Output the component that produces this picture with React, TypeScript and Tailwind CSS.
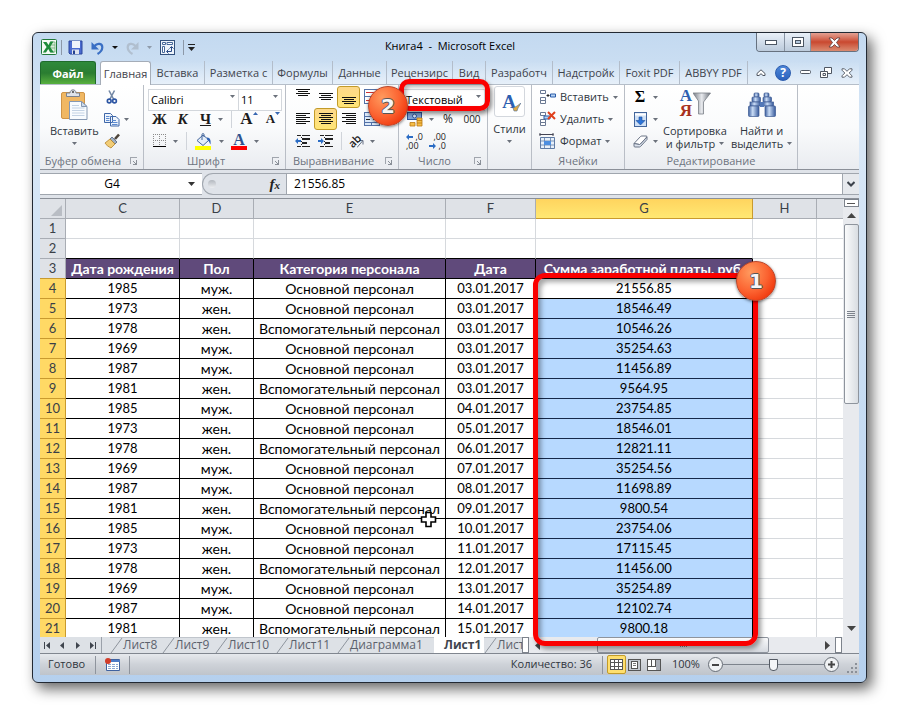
import React from "react";

const UI = "font-['Open_Sans','Noto_Sans',sans-serif]";

/* ---------- small shared pieces ---------- */

function Caret({ className = "" }: { className?: string }) {
  return (
    <svg width="5" height="3" viewBox="0 0 5 3" className={`shrink-0 ${className}`} aria-hidden="true">
      <path d="M0 0h5L2.500 3z" fill="#6b717b" />
    </svg>
  );
}

function Launcher() {
  return (
    <button aria-label="Параметры группы" className="mr-px flex h-[14px] w-4 items-center justify-center">
      <svg width="8" height="8" viewBox="0 0 8 8" shapeRendering="crispEdges">
        <path d="M0 7V0h7v1H1v6z" fill="#a0a5ad" />
        <path d="M7 3v5H3V7h2V6H4V5H3V4h1v1h1v1h1V3z" fill="#8a9098" />
      </svg>
    </button>
  );
}

function Group({
  label,
  width,
  launcher,
  children,
}: {
  label: string;
  width: string;
  launcher?: boolean;
  children: React.ReactNode;
}) {
  return (
    <section aria-label={label || "Стили"} className={`flex shrink-0 flex-col border-r border-[#b9bec6] pt-px ${width}`}>
      <div className="h-[67px]">{children}</div>
      <div className="flex h-4 items-center">
        <span className="flex-1 text-center text-[11px] leading-4 whitespace-nowrap text-[#6d7480]">{label}</span>
        {launcher && <Launcher />}
      </div>
    </section>
  );
}

function Tool({
  label,
  active,
  width = "w-[23px]",
  children,
}: {
  label: string;
  active?: boolean;
  width?: string;
  children: React.ReactNode;
}) {
  return (
    <button
      aria-label={label}
      className={`flex h-[22px] shrink-0 items-center justify-center ${width} ${
        active ? "rounded-[3px] border border-[#c29b29] bg-linear-to-b from-[#fdd88a] to-[#ffe575]" : ""
      }`}
    >
      {children}
    </button>
  );
}

function Divider() {
  return <div className="h-[18px] w-px shrink-0 bg-[#d0d4da]" />;
}

function Lines({ rows }: { rows: [number, number][] }) {
  return (
    <svg width="16" height="14" viewBox="0 0 16 14" shapeRendering="crispEdges">
      {rows.map(([x, w], i) => (
        <rect key={i} x={x} y={i * 2 + 1} width={w} height="1" fill="#111" />
      ))}
    </svg>
  );
}

function IndentIcon({ flip }: { flip?: boolean }) {
  return (
    <svg width="16" height="15" viewBox="0 0 16 15" shapeRendering="crispEdges">
      <path d="M2 1h4v1H2zM7 1h8v1H7zM7 4h8v2H7zM7 8h5v2H7zM2 12h4v1H2zM7 12h8v1H7zM6 3h1v1H6zM6 7h1v1H6zM6 10h1v1H6z" fill="#222" />
      <path d={flip ? "M6 7 3 4v2H0v2h3v2z" : "M0 7 3 4v2h3v2H3v2z"} fill="#2b6cc4" shapeRendering="auto" />
    </svg>
  );
}

/* ---------- icons ---------- */

const ExcelLogo = () => (
  <svg width="17" height="17" viewBox="0 0 17 17">
    <rect x=".5" y=".5" width="15" height="15" rx="1" fill="#f5faf5" stroke="#237a3b" />
    <path d="M9 3h5v10H9z" fill="#d9ecd9" stroke="#62a86e" strokeWidth=".7" />
    <path d="M9 6h5M9 9h5" stroke="#62a86e" strokeWidth=".7" />
    <path d="M2 3h3.500l2 3 2-3.500h3L9 8l4 5.500H9.500L7.200 10 5 13.500H1.800L5.600 8z" fill="#1f8c3b" />
  </svg>
);
const SaveIcon = () => (
  <svg width="15" height="15" viewBox="0 0 15 15">
    <path d="M1 1h13v13H2l-1-1z" fill="#4a6bd0" stroke="#2b479c" />
    <path d="M4 1h8v7H4z" fill="#eef3fb" />
    <path d="M4 9.500h7V14H4z" fill="#dfe4ee" />
    <path d="M5 10.500h2V14H5z" fill="#25418f" />
  </svg>
);
const UndoIcon = ({ color = "#3a6fc4", flip = false }) => (
  <svg width="13" height="14" viewBox="0 0 13 14" className={flip ? "-scale-x-100" : ""}>
    <path d="M3.500 5C6.500 1.500 11.500 2.500 11.300 6.500c-.1 2.500-1.800 4.800-4.800 6.500" fill="none" stroke={color} strokeWidth="2.200" />
    <path d="M.5 1v7.500H8z" fill={color} />
  </svg>
);
const PivotIcon = () => (
  <svg width="15" height="15" viewBox="0 0 15 15">
    <rect x=".5" y=".5" width="14" height="14" fill="#eef4fb" stroke="#33517d" />
    <path d="M2.500 2.500h3v2h-3zM7 2.500h5.500v2H7zM2.500 6.500h2v6h-2z" fill="#fff" stroke="#47689a" />
    <path d="M7 11.500h4.500V7M9.500 8.500l2-2 2 2M8.500 9.500l-2 2 2 2" fill="none" stroke="#2a4b86" />
  </svg>
);
const PasteIcon = () => (
  <svg width="28" height="32" viewBox="0 0 28 32">
    <rect x="1.500" y="3.500" width="23" height="26" rx="1.500" fill="#f0b762" stroke="#cf9446" />
    <path d="M6.500 7.500V4h3.500C10-.2 16-.2 16 4h3.500v3.500z" fill="#dfe3e8" stroke="#7b838e" />
    <circle cx="13" cy="3" r="1" fill="#444" />
    <path d="M9.500 12.500h12l5.500 5v13H9.500z" fill="#f8fbfe" stroke="#8598b3" />
    <path d="M21.500 12.500v5H27z" fill="#cfdcec" stroke="#8598b3" />
    <path d="M12 16.500h7M12 19h12.500M12 21.500h12.500M12 24h12.500M12 26.500h12.500" stroke="#c3d2e4" />
  </svg>
);
const CutIcon = () => (
  <svg width="12" height="16" viewBox="0 0 12 16">
    <path d="M3 1.500 7.500 10M8.500 1.500 4 10" stroke="#7488a5" strokeWidth="1.600" />
    <circle cx="3.200" cy="12" r="1.900" fill="none" stroke="#2c55a3" strokeWidth="1.600" />
    <circle cx="8.500" cy="12" r="1.900" fill="none" stroke="#2c55a3" strokeWidth="1.600" />
  </svg>
);
const CopyIcon = () => (
  <svg width="16" height="15" viewBox="0 0 16 15">
    <path d="M.5 1.500h6l2 2v7h-8zM6.500 4.500h5.500l3 3v6.500H6.500z" fill="#eef4fc" stroke="#3f67a8" />
    <path d="M2 4.500h3.500M2 6.500h3.500M2 8.500h3.500M8 8.500h4M8 10.500h5.500M8 12.500h5.500" stroke="#5d8bd0" />
  </svg>
);
const BrushIcon = () => (
  <svg width="16" height="16" viewBox="0 0 16 16">
    <path d="M15 1.500 11 6" stroke="#4d443a" strokeWidth="2.600" />
    <path d="m8 4 5 5-2 2-5-5z" fill="#9fb0c4" stroke="#50617a" strokeWidth=".8" />
    <path d="m6 6 5 5-4 4c-2-1-5-3-6-5z" fill="#f2cd76" stroke="#b2822b" strokeWidth=".8" />
  </svg>
);
const BorderIcon = () => (
  <svg width="14" height="14" viewBox="0 0 14 14" shapeRendering="crispEdges">
    <path d="M0 .5h13M0 6.500h13M.5 0v12M6.500 0v12M12.500 0v12" stroke="#8b8b8b" strokeDasharray="1 1" fill="none" />
    <path d="M0 12.500h13" stroke="#000" />
  </svg>
);
const FillIcon = () => (
  <svg width="17" height="17" viewBox="0 0 17 17">
    <path d="m2 7.500 6-5.500 6 5-6 5.500z" fill="#e4edf8" stroke="#42659b" />
    <path d="M7 7V1.500c0-1.300 2-1.300 2 0V4" fill="none" stroke="#42659b" />
    <path d="M12 4.500c3.500 0 4 3.500 3.500 7-1-1-1-3.500-3.500-5z" fill="#2f62b5" />
    <rect y="13" width="16" height="4" fill="#ff0" />
  </svg>
);
const MoneyIcon = () => (
  <svg width="17" height="16" viewBox="0 0 17 16">
    <rect x=".5" y="1.500" width="14" height="7" fill="#7ea2d6" stroke="#2d559c" />
    <circle cx="7.500" cy="5" r="2" fill="#dbe7f7" stroke="#2d559c" />
    <path d="M10 7h5v8h-5zM3 11.500h5V15H3z" fill="#f5bd47" stroke="#bb7a12" strokeWidth=".8" />
    <path d="M10 9.500h5M10 12h5" stroke="#bb7a12" strokeWidth=".8" />
  </svg>
);
const DecimalIcon = ({ more = false }) => (
  <span className="relative flex w-[17px] flex-col items-end text-[9px] leading-[9px] text-[#222]">
    <span>{more ? ",0" : ",00"}</span>
    <span className={more ? "self-start" : ""}>{more ? ",00" : ",0"}</span>
    <svg width="7" height="6" viewBox="0 0 7 6" className={`absolute left-0 ${more ? "top-[2px]" : "bottom-px"}`}>
      <path d={more ? "M0 3 3 0v2h4v2H3v2z" : "M7 3 4 0v2H0v2h4v2z"} fill="#2b6cc4" />
    </svg>
  </span>
);
const CellsIcon = ({ kind }: { kind: "insert" | "delete" | "format" }) => (
  <svg width="17" height="16" viewBox="0 0 17 16">
    {kind === "format" ? (
      <>
        <path d="M.5 1.500h14M1 0v3M14 0v3" stroke="#445" />
        <path d="M1.500 4.500h14v11h-14z" fill="#e7f0fb" stroke="#5f7ba5" />
        <path d="M1.500 8h14M1.500 12h14M5.500 4.500v11M11.500 4.500v11" stroke="#5f7ba5" strokeWidth=".8" />
        <rect x="5" y="8" width="7" height="4" fill="#4d8ee0" />
      </>
    ) : (
      <>
        <path d="M1.500 1.500h5v3h-5zM1.500 8.500h5v3h-5zM1.500 11.500h5v3h-5z" fill="#fff" stroke="#6a7892" />
        {kind === "insert" ? (
          <>
            <path d="M7.500 6.500h3M9 5v3" stroke="#222" />
            <path d="M11.500 5h5v3h-5z" fill="#b8d4f5" stroke="#2b5ca8" />
          </>
        ) : (
          <>
            <path d="M5 5h6v3H5z" fill="#b8d4f5" stroke="#2b5ca8" />
            <path d="m9 1 7 7M16 1 9 8" stroke="#e0401c" strokeWidth="2" />
          </>
        )}
      </>
    )}
  </svg>
);
const FillDownIcon = () => (
  <svg width="13" height="15" viewBox="0 0 13 15">
    <rect x=".5" y=".5" width="12" height="14" fill="#cfe0f5" stroke="#42659b" />
    <path d="M1 2.500h11" stroke="#fff" strokeWidth="2" />
    <path d="M5 5h3v3.500h3L6.500 13 2 8.500h3z" fill="#2c74d8" stroke="#1d4f9c" strokeWidth=".6" />
  </svg>
);
const EraserIcon = () => (
  <svg width="15" height="13" viewBox="0 0 15 13">
    <path d="M1 8.500 7.500 1.500q.5-.5 1.500-.5h4q1.500 0 .7 1L7.500 9q-.4.500-1 .5z" fill="#fff" stroke="#6a7486" />
    <path d="M1 8.500V11q0 1 1 1h4.500q.6 0 1-.5L14 4.500V2L7.500 9q-.4.500-1 .5z" fill="#dde4ee" stroke="#6a7486" />
  </svg>
);
const SortIcon = () => (
  <div className="flex h-[34px] w-[32px]">
    <div className="flex w-[14px] flex-col font-['Liberation_Serif',serif] text-[17px] leading-[15px] font-bold">
      <span className="text-[#2d5fb0]">А</span>
      <span className="text-[#a8321e]">Я</span>
    </div>
    <svg width="18" height="26" viewBox="0 0 18 26" className="mt-1">
      <defs>
        <linearGradient id="funnel">
          <stop offset="0" stopColor="#777c84" />
          <stop offset=".5" stopColor="#e8eaee" />
          <stop offset="1" stopColor="#6d727a" />
        </linearGradient>
      </defs>
      <path d="M0 1h17.500L10.500 10v12h-5V9z" fill="url(#funnel)" stroke="#7b8088" strokeWidth=".8" />
    </svg>
  </div>
);
const FindIcon = () => (
  <svg width="28" height="26" viewBox="0 0 28 26">
    <defs>
      <linearGradient id="tube">
        <stop offset="0" stopColor="#3d5f9e" />
        <stop offset=".4" stopColor="#c9dcf6" />
        <stop offset="1" stopColor="#35589a" />
      </linearGradient>
    </defs>
    {[0, 15].map((x) => (
      <g key={x} transform={`translate(${x} 0)`} stroke="#3c5a92" strokeWidth=".7">
        <rect x={x ? 1 : 6} y="1" width="5" height="4" rx="1" fill="url(#tube)" />
        <rect x={x ? 0 : 4} y="5" width="8.500" height="5" rx="1" fill="url(#tube)" />
        <rect x={x ? 0 : 2} y="10" width="10.500" height="4" fill="url(#tube)" />
        <rect x={x ? 2 : 0.5} y="14" width="10.500" height="10.500" rx="1" fill="url(#tube)" />
      </g>
    ))}
    <rect x="12" y="10" width="4" height="5" fill="#5278b8" />
  </svg>
);

/* ---------- title bar ---------- */

function TitleBar() {
  return (
    <header className="flex h-7 items-start">
      <div className="flex flex-1 items-center pt-[6px] pl-px">
        <ExcelLogo />
        <div className="ml-[3px] h-[15px] w-px bg-[#8c98a8]" />
        <button aria-label="Сохранить" className="ml-[6px]"><SaveIcon /></button>
        <button aria-label="Отменить" className="ml-2"><UndoIcon /></button>
        <svg width="6" height="3" className="ml-2"><path d="M0 0h6L3 3z" fill="#111" /></svg>
        <button aria-label="Вернуть" className="ml-2 opacity-60"><UndoIcon color="#a3adb9" flip /></button>
        <Caret className="ml-2 opacity-60" />
        <button aria-label="Сводная таблица" className="ml-2"><PivotIcon /></button>
        <div className="ml-2 h-[15px] w-px bg-[#8c98a8]" />
        <button aria-label="Настройка панели" className="ml-1">
          <svg width="8" height="8" viewBox="0 0 8 8"><path d="M0 0h7v1H0zM0 3h7L3.500 7z" fill="#222" /></svg>
        </button>
      </div>
      <h1 className="pt-[5px] text-[11px] leading-4 whitespace-nowrap text-black">Книга4&nbsp; -&nbsp; Microsoft Excel</h1>
      <div className="flex flex-1 justify-end">
        <div className="flex h-[19px] overflow-hidden rounded-b-[4px] border border-t-0 border-[#66717f]">
          <button aria-label="Свернуть" className="flex w-7 items-center justify-center border-r border-[#8793a2] bg-linear-to-b from-[#e9f0f8] to-[#bccbdc]">
            <svg width="12" height="5"><rect x=".5" y=".5" width="11" height="4" fill="#fff" stroke="#4c5663" /></svg>
          </button>
          <button aria-label="Развернуть" className="flex w-[26px] items-center justify-center border-r border-[#8793a2] bg-linear-to-b from-[#e9f0f8] to-[#bccbdc]">
            <svg width="12" height="10"><rect x=".5" y=".5" width="11" height="9" fill="#fff" stroke="#4c5663" /><rect x="3.500" y="3.500" width="5" height="3" fill="#b4c8dd" stroke="#4c5663" /></svg>
          </button>
          <button aria-label="Закрыть" className="flex w-[47px] items-center justify-center bg-linear-to-b from-[#e3a193] via-[#c9482f] to-[#d98a70]">
            <svg width="13" height="11" viewBox="0 0 13 11"><path d="M1 1h3l2.500 2.500L9 1h3L8.500 5.500 12 10H9L6.500 7.500 4 10H1l3.500-4.500z" fill="#fff" stroke="#5b3a3a" strokeWidth=".8" /></svg>
          </button>
        </div>
      </div>
    </header>
  );
}

/* ---------- ribbon tabs ---------- */

const TABS: [string, string][] = [
  ["Вставка", "w-[54px]"],
  ["Разметка с", "w-[68px]"],
  ["Формулы", "w-[60px]"],
  ["Данные", "w-[54px]"],
  ["Рецензирс", "w-[66px]"],
  ["Вид", "w-[33px]"],
  ["Разработч", "w-[67px]"],
  ["Надстройк", "w-[67px]"],
  ["Foxit PDF", "w-[60px]"],
  ["ABBYY PDF", "w-[68px]"],
];

function Tabs() {
  return (
    <nav className="flex h-[23px] text-[11px] leading-[21px] whitespace-nowrap text-[#3f444c]">
      <button className="w-14 rounded-t-[3px] border border-b-0 border-[#1f6b2c] bg-linear-to-b from-[#2f8a3b] via-[#2a7d31] to-[#58b03e] font-bold text-white">
        Файл
      </button>
      <button className="relative z-10 -mb-px ml-1 w-[51px] rounded-t-[3px] border border-b-0 border-[#a5adb8] bg-white">
        Главная
      </button>
      {TABS.map(([t, w]) => (
        <button key={t} className={`border-r border-[#b3bdca] bg-linear-to-b from-white/0 to-white/50 ${w}`}>
          {t}
        </button>
      ))}
      <div className="flex flex-1 items-center justify-between bg-linear-to-b from-white/0 to-white/50 pr-[6px] pl-2">
        <button aria-label="Свернуть ленту">
          <svg width="10" height="8" viewBox="0 0 10 8"><path d="M5 .8 9 4.500v2H7L5 4.700 3 6.500H1v-2z" fill="#fff" stroke="#4f5662" /></svg>
        </button>
        <button aria-label="Справка" className="flex size-4 items-center justify-center rounded-full border border-[#2b5cae] bg-linear-to-b from-[#4d86d8] to-[#2c62bd] text-[12px] leading-[14px] font-bold text-white">
          ?
        </button>
        <button aria-label="Свернуть окно"><svg width="11" height="5"><rect x=".5" y=".5" width="10" height="3" rx="1" fill="#fff" stroke="#4f5662" /></svg></button>
        <button aria-label="Восстановить окно">
          <svg width="12" height="11"><path d="M4.500.5h7v6h-7z" fill="#fff" stroke="#4f5662" /><path d="M.5 4.500h7v6h-7z" fill="#fff" stroke="#4f5662" /><path d="M3 6.500h2.500v2H3z" fill="none" stroke="#4f5662" /></svg>
        </button>
        <button aria-label="Закрыть книгу">
          <svg width="12" height="10" viewBox="0 0 12 10"><path d="M1 .8h2.500L6 3.300 8.500.8H11v1.400L8.200 5 11 7.800v1.400H8.500L6 6.700 3.500 9.200H1V7.800L3.800 5 1 2.200z" fill="#fff" stroke="#4f5662" strokeWidth=".9" /></svg>
        </button>
      </div>
    </nav>
  );
}

/* ---------- ribbon ---------- */

function Combo({ label, value, className }: { label: string; value: string; className: string }) {
  return (
    <div className={`relative h-[22px] ${className}`}>
      <select
        aria-label={label}
        defaultValue={value}
        className="size-full appearance-none border border-[#d3d7dc] bg-white pl-[2px] text-[11px] leading-4 text-black"
      >
        <option>{value}</option>
      </select>
      <Caret className="pointer-events-none absolute top-[9px] right-1" />
    </div>
  );
}

function Badge({ n, className }: { n: number; className: string }) {
  return (
    <div
      className={`absolute z-30 flex size-10 items-center justify-center rounded-full border border-[#b8452a] bg-radial-[at_35%_28%] from-[#ff9a5e] via-[#fb6230] to-[#ee3208] to-85% font-['DejaVu_Sans',sans-serif] text-[20px] leading-none font-bold text-[#f6f6f6] shadow-[0_1px_3px_rgba(0,0,0,.5)] [text-shadow:1px_0_#555,-1px_0_#555,0_1px_#555,0_-1px_#555] ${className}`}
    >
      {n}
    </div>
  );
}

function BigButton({ icon, lines }: { icon: React.ReactNode; lines: string[] }) {
  return (
    <button className="flex flex-col items-center text-[11px] leading-[13px] whitespace-nowrap text-[#2f3640]">
      <span className="flex h-[38px] items-center">{icon}</span>
      <span>{lines[0]}</span>
      <span className="flex h-[13px] items-center gap-1">
        {lines[1]}
        <Caret />
      </span>
    </button>
  );
}

const FULL: [number, number] = [1, 14];
const MID: [number, number] = [3, 10];

function Ribbon() {
  return (
    <div className="flex h-[86px] border-y border-t-[#b5bec9] border-b-[#8b9098] bg-linear-to-b from-white via-[#fafbfc] to-[#e9ecf0]">
      <Group label="Буфер обмена" width="w-[104px]" launcher>
        <div className="flex">
          <div className="w-[64px] pl-[10px]">
            <BigButton icon={<PasteIcon />} lines={["Вставить", ""]} />
          </div>
          <div className="flex flex-col">
            <Tool label="Вырезать" width="w-4"><CutIcon /></Tool>
            <div className="flex items-center gap-1"><Tool label="Копировать" width="w-4"><CopyIcon /></Tool><Caret /></div>
            <Tool label="Формат по образцу" width="w-4"><BrushIcon /></Tool>
          </div>
        </div>
      </Group>

      <Group label="Шрифт" width="w-[142px]" launcher>
        <div className="pl-1">
          <div className="flex h-[22px]">
            <Combo label="Шрифт" value="Calibri" className="w-[91px]" />
            <Combo label="Размер шрифта" value="11" className="-ml-px w-11" />
          </div>
          <div className="flex h-[22px] items-center font-['Liberation_Serif',serif] text-[15px] font-bold text-[#1c1c1c]">
            <Tool label="Полужирный">Ж</Tool>
            <Tool label="Курсив"><i>К</i></Tool>
            <Tool label="Подчеркнутый"><u>Ч</u></Tool>
            <Caret className="ml-px" />
            <div className="ml-2"><Divider /></div>
            <Tool label="Увеличить размер" width="w-8 ml-px">
              <span className="text-[17px]">А</span>
              <svg width="5" height="3" className="mb-3"><path d="M0 3h5L2.500 0z" fill="#3666b0" /></svg>
            </Tool>
            <Tool label="Уменьшить размер" width="w-4">
              <span className="text-[13px]">А</span>
              <svg width="5" height="3" className="mb-3"><path d="M0 0h5L2.500 3z" fill="#3666b0" /></svg>
            </Tool>
          </div>
          <div className="flex h-[22px] items-center">
            <Tool label="Границы"><BorderIcon /></Tool>
            <Caret className="ml-[2px]" />
            <div className="ml-2"><Divider /></div>
            <Tool label="Цвет заливки" width="w-8"><FillIcon /></Tool>
            <Caret />
            <Tool label="Цвет текста" width="w-[30px]">
              <span className="w-4 border-b-4 border-[#f00] text-center font-['Liberation_Serif',serif] text-[16px] leading-[13px] font-bold text-[#2f528f]">А</span>
            </Tool>
            <Caret />
          </div>
        </div>
      </Group>

      <Group label="Выравнивание" width="w-[113px]" launcher>
        <div className="pl-[5px]">
          <div className="flex h-[22px]">
            <Tool label="По верхнему краю"><span className="mb-1"><Lines rows={[FULL, MID, FULL, MID]} /></span></Tool>
            <Tool label="По середине"><Lines rows={[[1, 0], FULL, MID, FULL, MID]} /></Tool>
            <Tool label="По нижнему краю" active><span className="mt-1"><Lines rows={[[1, 0], [1, 0], FULL, MID, FULL, MID]} /></span></Tool>
            <Tool label="Перенос текста">
              <svg width="16" height="16" shapeRendering="crispEdges"><path d="M.5.500h15v14H.5zM0 7.500h15" fill="#fff" stroke="#5472a8" /><path d="M2 3.500h12M2 11.500h12" stroke="#c33" /></svg>
            </Tool>
          </div>
          <div className="flex h-[22px]">
            <Tool label="По левому краю"><Lines rows={[[1, 14], [1, 10], [1, 14], [1, 10], [1, 14], [1, 10]]} /></Tool>
            <Tool label="По центру" active><Lines rows={[FULL, MID, FULL, MID, FULL, MID]} /></Tool>
            <Tool label="По правому краю"><Lines rows={[[1, 14], [5, 10], [1, 14], [5, 10], [1, 14], [5, 10]]} /></Tool>
            <Tool label="Объединить">
              <svg width="16" height="15" shapeRendering="crispEdges"><path d="M.5.500h15v13H.5zM0 4.500h15M0 10.500h15M7.500 0v4M7.500 10v4" fill="#dce9f8" stroke="#5472a8" /><path d="M2 7.500h12" stroke="#222" strokeDasharray="4 3" /></svg>
            </Tool>
          </div>
          <div className="flex h-[22px] items-center">
            <Tool label="Уменьшить отступ"><IndentIcon /></Tool>
            <Tool label="Увеличить отступ"><IndentIcon flip /></Tool>
            <div className="ml-1"><Divider /></div>
            <Tool label="Ориентация" width="w-7">
              <span className="-rotate-45 text-[11px] leading-3 font-semibold text-[#222]">ab</span>
              <svg width="7" height="9" className="mt-1 -ml-1"><path d="M0 8.500 5.500 2M2 1.500h4v4" fill="none" stroke="#667085" /></svg>
            </Tool>
            <Caret />
          </div>
        </div>
      </Group>

      <Group label="Число" width="w-[89px]" launcher>
        <div className="relative pl-1">
          <div className="flex h-[22px]"><Combo label="Числовой формат" value="Текстовый" className="w-[82px]" /></div>
          <div className="flex h-[22px] items-center text-[11px] text-[#222]">
            <Tool label="Финансовый формат" width="w-6"><MoneyIcon /></Tool>
            <Caret className="ml-[2px]" />
            <Tool label="Процентный формат" width="w-7"><span className="text-[12px]">%</span></Tool>
            <Tool label="Формат с разделителями" width="w-5"><span className="text-[10px]">000</span></Tool>
          </div>
          <div className="flex h-[22px] items-center">
            <Tool label="Увеличить разрядность"><DecimalIcon more /></Tool>
            <Tool label="Уменьшить разрядность"><DecimalIcon /></Tool>
          </div>
          <div className="pointer-events-none absolute -top-[7px] left-0 z-20 h-8 w-[91px] rounded-[10px] border-5 border-[#fa0000] shadow-[2px_3px_4px_rgba(0,0,0,.45),inset_2px_3px_4px_rgba(0,0,0,.3)]" />
          <Badge n={2} className="top-0 left-[-31px]" />
        </div>
      </Group>

      <Group label="" width="w-11">
        <button className="flex w-full flex-col items-center text-[11px] leading-[13px] text-[#2f3640]">
          <span className="flex h-[31px] w-[31px] items-center justify-center rounded-[3px] border border-[#d3d7dd] bg-white font-['Liberation_Serif',serif] text-[19px] font-bold text-[#2d5fb0]">
            <span className="ml-1">А</span>
            <svg width="9" height="9" className="mt-3 -ml-1"><path d="M9 0 5 3 1 5l1 3h3l1-3z" fill="#e0ab45" stroke="#4f6f9c" strokeWidth=".6" /></svg>
          </span>
          <span className="mt-[5px]">Стили</span>
          <Caret className="mt-[5px]" />
        </button>
      </Group>

      <Group label="Ячейки" width="w-[93px]">
        <div className="pl-[7px] text-[11px] text-[#2f3640]">
          {(
            [
              ["insert", "Вставить"],
              ["delete", "Удалить"],
              ["format", "Формат"],
            ] as const
          ).map(([k, t]) => (
            <button key={k} className="flex h-[22px] items-center gap-1">
              <CellsIcon kind={k} />
              {t}
              <Caret />
            </button>
          ))}
        </div>
      </Group>

      <Group label="Редактирование" width="w-[173px]">
        <div className="flex pl-[6px]">
          <div className="w-8">
            <div className="flex items-center"><Tool label="Сумма" width="w-[18px]"><span className="font-['Liberation_Serif',serif] text-[16px] font-bold text-black">Σ</span></Tool><Caret className="ml-1" /></div>
            <div className="flex items-center"><Tool label="Заполнить" width="w-[18px]"><FillDownIcon /></Tool><Caret className="ml-1" /></div>
            <div className="flex items-center"><Tool label="Очистить" width="w-[18px]"><EraserIcon /></Tool><Caret className="ml-1" /></div>
          </div>
          <BigButton icon={<SortIcon />} lines={["Сортировка", "и фильтр"]} />
          <div className="w-1" />
          <BigButton icon={<FindIcon />} lines={["Найти и", "выделить"]} />
        </div>
      </Group>
    </div>
  );
}

/* ---------- formula bar ---------- */

function FormulaBar() {
  return (
    <div className="flex h-[29px] border-b border-[#8b9098] bg-[#dfe3e9] pt-[3px] pb-[3px] text-[12px] text-black">
      <div className="flex w-[162px] items-center border-y border-[#a0a6ae] bg-white pr-[7px] pl-0">
        <input aria-label="Имя ячейки" defaultValue="G4" className="min-w-0 flex-1 bg-transparent pr-1 text-center outline-none" />
        <svg width="7" height="4"><path d="M0 0h7L3.500 4z" fill="#333" /></svg>
      </div>
      <div className="flex w-[84px] items-center justify-between rounded-l-full border border-r-0 border-[#a0a6ae] pr-[6px] pl-[5px]">
        <span className="size-2 rounded-full bg-linear-to-b from-[#b3b8bf] to-[#eceef1]" />
        <button aria-label="Вставить функцию" className="font-['Liberation_Serif',serif] text-[15px] leading-4 font-bold text-[#222] italic">
          f<span className="text-[11px]">x</span>
        </button>
      </div>
      <input aria-label="Строка формул" defaultValue="21556.85" className="min-w-0 flex-1 border border-[#a0a6ae] bg-white pl-[7px] outline-none" />
      <button aria-label="Развернуть строку формул" className="flex w-4 items-center justify-center border-y border-[#a0a6ae] bg-[#e6e9ed]">
        <svg width="8" height="6"><path d="M.5 1 4 4.500 7.500 1" fill="none" stroke="#3c424b" strokeWidth="2" /></svg>
      </button>
    </div>
  );
}

/* ---------- worksheet ---------- */

const YEARS = ["1985", "1973", "1978", "1969", "1987", "1981"];
const SEX = ["муж.", "жен.", "жен.", "муж.", "муж.", "жен."];
const ROWS: [string, string][] = [
  ["03.01.2017", "21556.85"],
  ["03.01.2017", "18546.49"],
  ["03.01.2017", "10546.26"],
  ["03.01.2017", "35254.63"],
  ["03.01.2017", "11456.89"],
  ["03.01.2017", "9564.95"],
  ["04.01.2017", "23754.85"],
  ["05.01.2017", "18546.01"],
  ["06.01.2017", "12821.11"],
  ["07.01.2017", "35254.56"],
  ["08.01.2017", "11698.89"],
  ["09.01.2017", "9800.54"],
  ["10.01.2017", "23754.06"],
  ["11.01.2017", "17115.45"],
  ["12.01.2017", "11456.00"],
  ["13.01.2017", "35254.89"],
  ["14.01.2017", "12102.74"],
  ["15.01.2017", "9800.18"],
];

const HEAD = "border-r border-b border-[#a9adb4] bg-[#dfe2e7] text-[13px] font-normal text-[#3a3f47]";
const ROWHEAD = "border-r border-b font-normal text-[#3a3f47] text-[13px] h-5 p-0";
const EMPTY = "border-r border-b border-[#d6d9dd]";
const DATA = "border-r border-b border-black p-0";

function Sheet() {
  return (
    <div className="flex">
      <div className="relative h-[438px] min-w-0 flex-1">
        <div className="h-full overflow-hidden">
          <table className="w-full table-fixed border-separate border-spacing-0 bg-white text-center font-['Lato','Open_Sans',sans-serif] text-[14px] leading-[19px] whitespace-nowrap text-black">
            <colgroup>
              <col className="w-[26px]" />
              <col className="w-[114px]" />
              <col className="w-[74px]" />
              <col className="w-[192px]" />
              <col className="w-[90px]" />
              <col className="w-[217px]" />
              <col className="w-[64px]" />
              <col />
            </colgroup>
            <thead>
              <tr className="h-5">
                <th className={`${HEAD} p-0`}>
                  <svg width="11" height="11" className="mt-[3px] ml-[11px]"><path d="M11 0v11H0z" fill="#b9bdc4" /></svg>
                </th>
                {["C", "D", "E", "F"].map((c) => (
                  <th key={c} scope="col" className={`${HEAD} p-0`}>{c}</th>
                ))}
                <th scope="col" className="border-r border-b border-[#c99a2e] bg-linear-to-b from-[#ffd45e] to-[#ffe873] p-0 text-[13px] font-normal text-[#3a3f47]">G</th>
                <th scope="col" className={`${HEAD} p-0`}>H</th>
                <th className={`${HEAD} border-r-0 p-0`} />
              </tr>
            </thead>
            <tbody>
              {[1, 2].map((n) => (
                <tr key={n} className="h-5">
                  <th scope="row" className={`${ROWHEAD} border-[#a9adb4] bg-[#dfe2e7]`}>{n}</th>
                  {[0, 1, 2, 3, 4].map((i) => (
                    <td key={i} className={n === 2 ? "border-r border-b border-r-[#d6d9dd] border-b-black" : EMPTY} />
                  ))}
                  <td className={EMPTY} />
                  <td className="border-b border-[#d6d9dd]" />
                </tr>
              ))}
              <tr className="h-5 bg-[#604a7b] font-bold text-white">
                <th scope="row" className={`${ROWHEAD} border-r-[#a9adb4] border-b-[#c99a2e] bg-[#dfe2e7]`}>3</th>
                {["Дата рождения", "Пол", "Категория персонала", "Дата", "Сумма заработной платы, руб."].map((h) => (
                  <td key={h} className={DATA}>{h}</td>
                ))}
                <td className={`${EMPTY} bg-white`} />
                <td className="border-b border-[#d6d9dd] bg-white" />
              </tr>
              {ROWS.map(([date, sum], i) => (
                <tr key={i} className="h-5">
                  <th scope="row" className={`${ROWHEAD} border-[#c99a2e] bg-[#ffd965]`}>{i + 4}</th>
                  <td className={`${DATA} text-[13px]`}>{YEARS[i % 6]}</td>
                  <td className={DATA}>{SEX[i % 6]}</td>
                  <td className={DATA}>{i % 3 === 2 ? "Вспомогательный персонал" : "Основной персонал"}</td>
                  <td className={`${DATA} text-[13px]`}>{date}</td>
                  <td className={`${DATA} text-[13px] ${i ? "border-b-[#16294a] bg-[#b7d9ff]" : ""}`}>{sum}</td>
                  <td className={EMPTY} />
                  <td className="border-b border-[#d6d9dd]" />
                </tr>
              ))}
            </tbody>
          </table>
        </div>
        <div className="pointer-events-none absolute top-[74px] left-[493px] z-20 h-[373px] w-[225px] rounded-[12px] border-5 border-[#fa0000] shadow-[3px_3px_5px_rgba(0,0,0,.4),inset_3px_4px_5px_rgba(0,0,0,.35)]" />
        <Badge n={1} className="top-[62px] left-[696px]" />
        <svg width="17" height="17" viewBox="0 0 17 17" className="absolute top-[312px] left-[380px] z-10">
          <path d="M6 1.500h5V6h4.500v5H11v4.500H6V11H1.500V6H6z" fill="#fff" stroke="#000" strokeWidth="1.600" />
        </svg>
      </div>
      <div className="flex w-4 flex-col items-center bg-[#e8eaee]">
        <div className="flex h-[8px] w-[15px] items-center justify-center border border-[#7d838c] bg-white"><span className="h-px w-2 bg-[#555]" /></div>
        <button aria-label="Вверх" className="flex h-[17px] w-full items-center justify-center"><svg width="9" height="5"><path d="M0 5h9L4.500 0z" fill="#444" /></svg></button>
        <div className="flex h-[180px] w-[15px] flex-col items-center justify-center gap-px rounded-[2px] border border-[#8e949d] bg-linear-to-r from-[#fafbfc] to-[#d9dde2]">
          {[0, 1, 2, 3].map((i) => <span key={i} className="h-px w-2 bg-[#7d838c]" />)}
        </div>
        <div className="flex-1" />
        <button aria-label="Вниз" className="flex h-[17px] w-full items-center justify-center"><svg width="9" height="5"><path d="M0 0h9L4.500 5z" fill="#444" /></svg></button>
      </div>
    </div>
  );
}

/* ---------- sheet tabs ---------- */

const SHEETS: [string, string][] = [
  ["Лист8", "w-[52px]"],
  ["Лист9", "w-[53px]"],
  ["Лист10", "w-[61px]"],
  ["Лист11", "w-[61px]"],
  ["Диаграмма1", "w-[97px]"],
  ["Лист1", "w-[50px]"],
  ["Лист", "w-[38px]"],
];

function SheetTabs() {
  const arrows = ["M0 0h1v7H0zM6 0v7L2 3.500z", "M5 0v7L1 3.500z", "M1 0v7l4-3.500z", "M0 0v7l4-3.500zM5 0h1v7H5z"];
  return (
    <div className="flex h-4 bg-[#dde1e6] text-[12px] leading-4 whitespace-nowrap text-[#5c626d]">
      <div className="flex w-[62px] items-center justify-around border-r border-[#9ba1aa]">
        {arrows.map((d, i) => (
          <button key={i} aria-label={["Первый лист", "Предыдущий", "Следующий", "Последний лист"][i]}>
            <svg width="7" height="7"><path d={d} fill="#3f454e" /></svg>
          </button>
        ))}
      </div>
      <div className="flex pl-2">
        {SHEETS.map(([s, w]) => {
          const on = s === "Лист1";
          return (
            <button key={s} className={`flex ${w} ${on ? "bg-white font-bold text-[#3f454e]" : "border-t border-[#c0c5cc]"}`}>
              <svg width="13" height="16" className={`shrink-0 ${on ? "w-[10px]" : ""}`}><path d="M1 15 12 0" stroke={on ? "none" : "#8e949d"} fill="none" /></svg>
              <span className={on ? "" : "-mt-px"}>{s}</span>
            </button>
          );
        })}
      </div>
      <div className="z-10 h-4 w-[7px] border border-[#7d838c] bg-white" />
      <div className="flex min-w-0 flex-1 items-center bg-[#e8eaee]">
        <button aria-label="Влево" className="flex w-4 justify-center"><svg width="5" height="9"><path d="M5 0v9L0 4.500z" fill="#444" /></svg></button>
        <div className="ml-[52px] flex h-4 w-[172px] items-center justify-center gap-px rounded-[2px] border border-[#8e949d] bg-linear-to-b from-[#fafbfc] to-[#d5d9df]">
          {[0, 1, 2, 3].map((i) => <span key={i} className="h-1 w-px bg-[#7d838c]" />)}
        </div>
        <div className="flex-1" />
        <button aria-label="Вправо" className="flex w-4 justify-center"><svg width="5" height="9"><path d="M0 0v9l5-4.500z" fill="#444" /></svg></button>
      </div>
      <div className="h-4 w-[7px] border border-[#7d838c] bg-white" />
      <div className="w-[17px] bg-[#e8eaee]" />
    </div>
  );
}

/* ---------- status bar ---------- */

function StatusBar() {
  return (
    <footer className="flex h-[22px] items-center border-t border-[#80868f] bg-linear-to-b from-[#e6e9ed] via-[#ced2d8] to-[#bfc4cb] text-[11px] whitespace-nowrap text-[#2f343c]">
      <span className="w-[55px] pl-2">Готово</span>
      <div className="h-[18px] w-px bg-[#8e949d]" />
      <button aria-label="Запись макроса" className="ml-[9px]">
        <svg width="16" height="14"><path d="M1.500 1.500h13v11h-13z" fill="#fff" stroke="#3f62a0" /><path d="M2 2h13v2H2z" fill="#4d7ac6" /><path d="M3 6.500h10M3 8.500h10M3 10.500h10" stroke="#8ba7d4" strokeDasharray="3 1" /><circle cx="3" cy="3" r="3" fill="#d23c28" /></svg>
      </button>
      <div className="ml-2 h-[18px] w-px bg-[#8e949d]" />
      <span className="flex-1 pr-[10px] text-right">Количество: 36</span>
      <div className="h-[18px] w-px bg-[#8e949d]" />
      <button aria-label="Обычный" className="ml-1 flex size-[19px] items-center justify-center rounded-[2px] border border-[#c29b29] bg-[#ffdf6e]">
        <svg width="13" height="11" shapeRendering="crispEdges"><path d="M.5.500h12v10H.5zM0 3.500h13M0 7h13M4.500 0v10M8.500 0v10" fill="#fff" stroke="#555" /></svg>
      </button>
      <button aria-label="Разметка страницы" className="ml-[2px]">
        <svg width="13" height="12" shapeRendering="crispEdges"><path d="M.5.500h12v11H.5z" fill="#c5cad1" stroke="#555" /><path d="M3.500 2.500h6v7h-6z" fill="#fff" stroke="#555" /><path d="M5 4.500h3M5 6.500h3" stroke="#777" /></svg>
      </button>
      <button aria-label="Страничный" className="ml-[6px]">
        <svg width="14" height="12" shapeRendering="crispEdges"><path d="M.5.500h13v11H.5z" fill="#fff" stroke="#555" /><path d="M4.500 0v7M8.500 0v7M0 7.500h9" stroke="#555" /><path d="M9 1h4v10H9z" fill="#a9aeb6" /></svg>
      </button>
      <span className="ml-[11px] w-9">100%</span>
      <button aria-label="Уменьшить" className="flex size-[15px] items-center justify-center rounded-full border border-[#666c75] bg-[#f0f2f4]">
        <span className="h-[2px] w-[7px] bg-[#444]" />
      </button>
      <input
        type="range"
        aria-label="Масштаб"
        defaultValue={50}
        className="h-[13px] w-[101px] appearance-none bg-[linear-gradient(#7d838c,#7d838c)] bg-size-[100%_1px] bg-center bg-no-repeat [&::-webkit-slider-thumb]:h-[12px] [&::-webkit-slider-thumb]:w-[9px] [&::-webkit-slider-thumb]:appearance-none [&::-webkit-slider-thumb]:rounded-b-[4px] [&::-webkit-slider-thumb]:border [&::-webkit-slider-thumb]:border-[#555b64] [&::-webkit-slider-thumb]:bg-[#f4f5f7]"
      />
      <button aria-label="Увеличить" className="flex size-[15px] items-center justify-center rounded-full border border-[#666c75] bg-[#f0f2f4]">
        <svg width="7" height="7"><path d="M0 3.500h7M3.500 0v7" stroke="#444" strokeWidth="2" /></svg>
      </button>
      <svg width="11" height="11" className="mt-2 ml-2 mr-px" shapeRendering="crispEdges">
        <path d="M8 0h2v2H8zM4 4h2v2H4zM8 4h2v2H8zM0 8h2v2H0zM4 8h2v2H4zM8 8h2v2H8z" fill="#8b9098" />
      </svg>
    </footer>
  );
}

export default function App() {
  return (
    <main className={`min-h-screen bg-white p-8 ${UI}`}>
      <div className="rounded-[6px] border border-[#222933] bg-linear-to-b from-[#c3d9f0] via-[#d9e8f7] via-15% to-[#b5d0ee] px-[7px] pb-[7px] shadow-[5px_6px_14px_rgba(0,0,0,.6)]">
        <TitleBar />
        <Tabs />
        <Ribbon />
        <FormulaBar />
        <Sheet />
        <SheetTabs />
        <StatusBar />
      </div>
    </main>
  );
}
